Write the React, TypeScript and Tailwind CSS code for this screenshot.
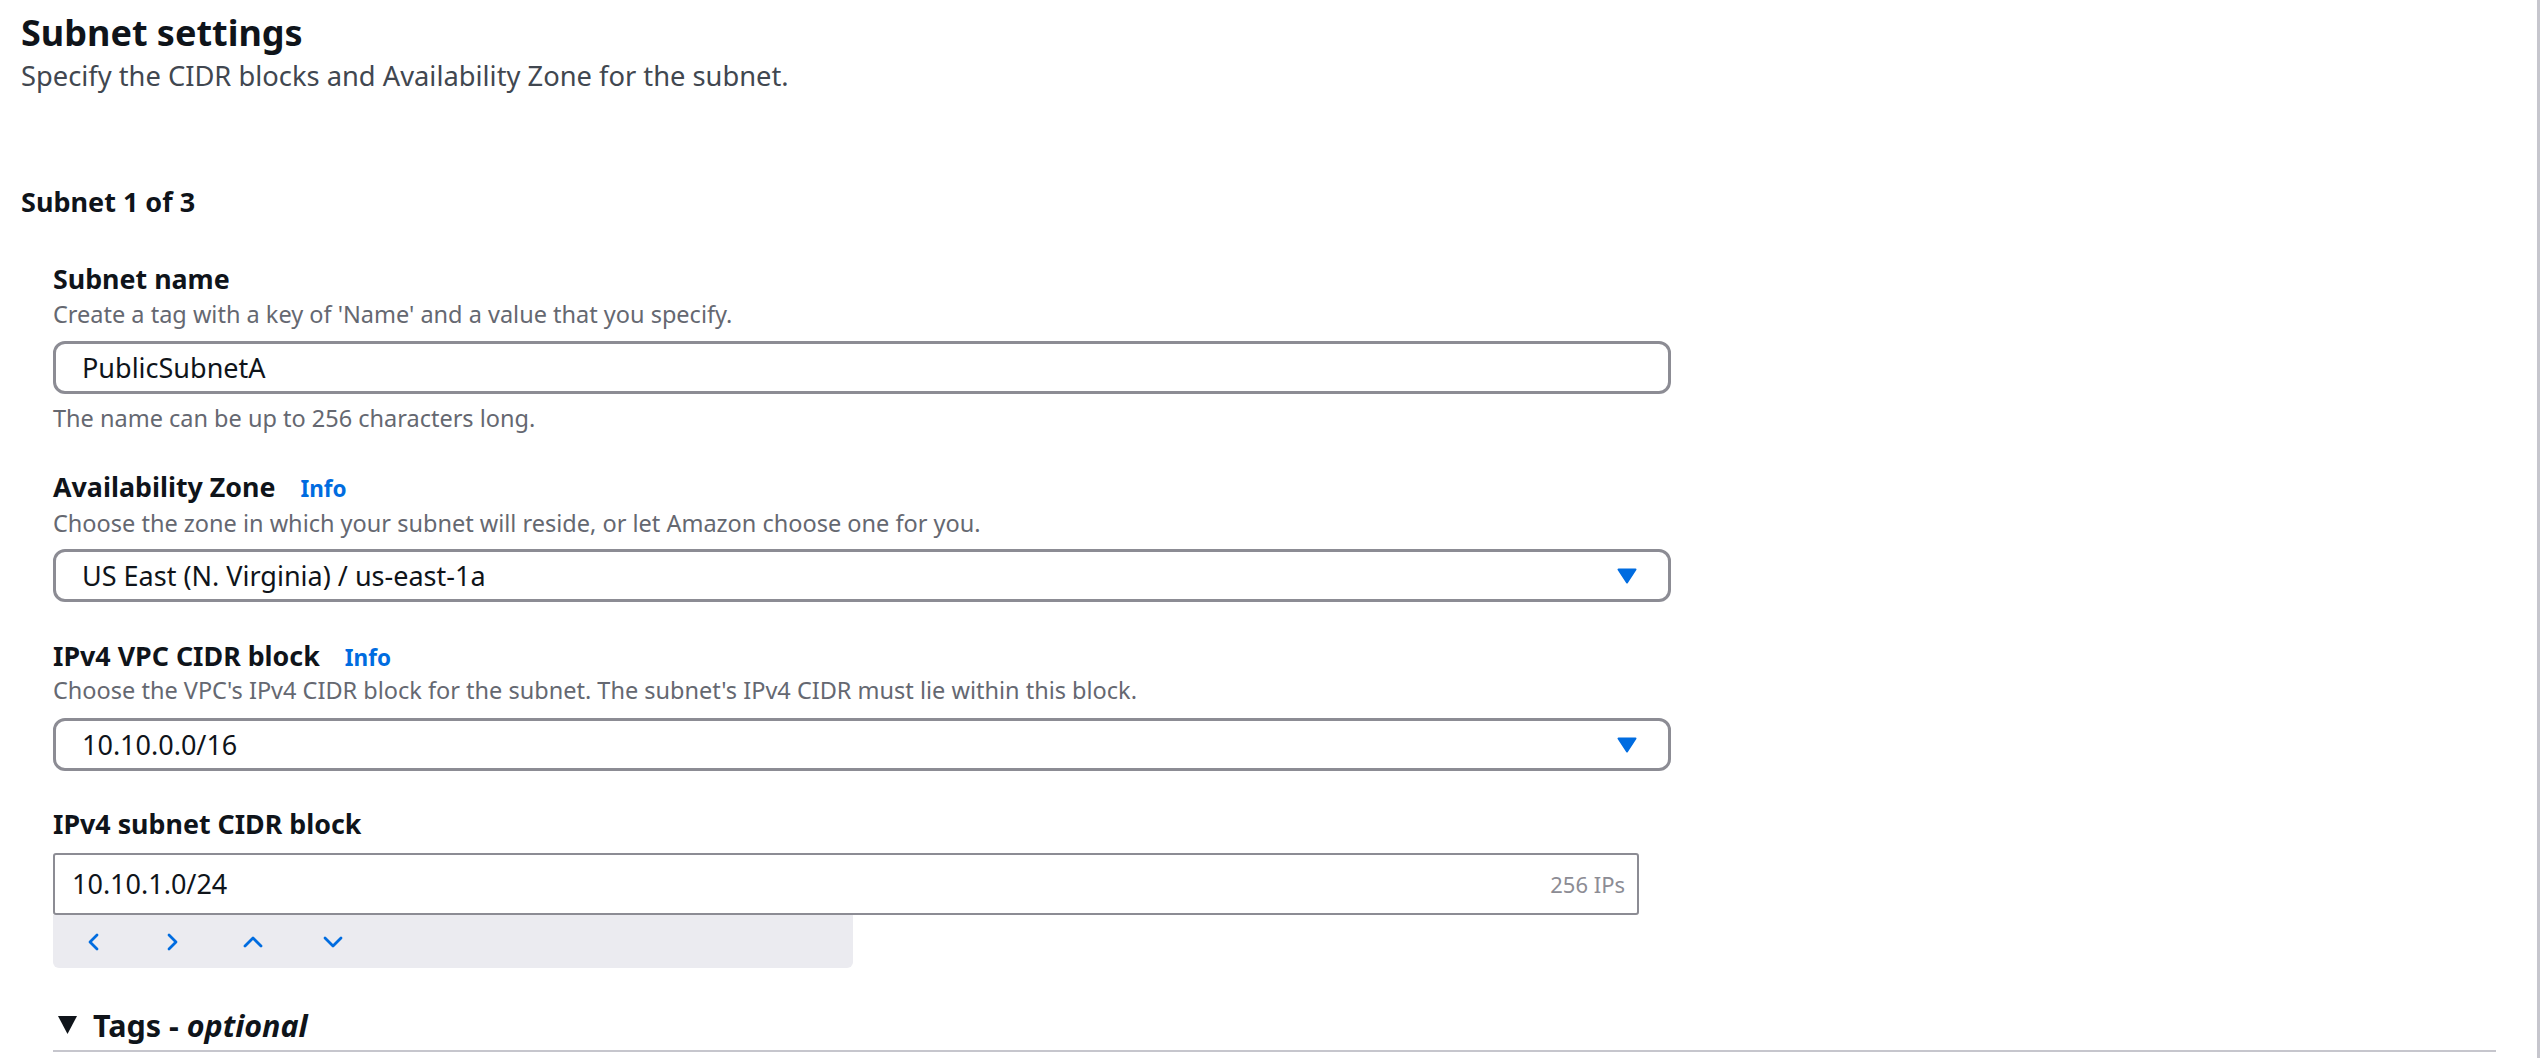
import React from 'react';

const Label = ({ text, info, className }: { text: string; info?: boolean; className?: string }) => (
  <div className={`h-[34px] text-[26.8px] leading-[34px] font-bold ${className ?? ''}`}>
    <span>{text}</span>
    {info && <span className="ml-[25px] text-[22.5px] leading-none font-bold text-[#006ce0]">Info</span>}
  </div>
);

const Hint = ({ text, className }: { text: string; className?: string }) => (
  <p className={`text-[23.5px] leading-[30px] text-[#656871] ${className ?? ''}`}>{text}</p>
);

const Box = ({ value, select, className }: { value: string; select?: boolean; className?: string }) => (
  <div
    className={`flex h-[53px] w-[1618px] items-center justify-between rounded-[12px] border-[3px] border-[#8c8c94] pl-[26px] pr-[31px] ${className ?? ''}`}
  >
    <span className="text-[27px] leading-[34px]">{value}</span>
    {select && (
      <svg width="20" height="16" viewBox="0 0 20 16">
        <path d="M1.5 1.5 H18.5 L10 14.5 Z" fill="#006ce0" stroke="#006ce0" strokeWidth="2" strokeLinejoin="round" />
      </svg>
    )}
  </div>
);

const Chevron = ({ dir }: { dir: 'left' | 'right' | 'up' | 'down' }) => {
  const pts = {
    left: '10,2 3,9 10,16',
    right: '2,2 9,9 2,16',
    up: '2,13 10,5 18,13',
    down: '2,5 10,13 18,5',
  }[dir];
  const w = dir === 'left' || dir === 'right' ? 12 : 20;
  const vb = dir === 'left' || dir === 'right' ? '0 0 12 18' : '0 0 20 18';
  return (
    <button className="flex h-full w-[80px] items-center justify-center">
      <svg width={w} height="18" viewBox={vb}>
        <polyline points={pts} fill="none" stroke="#006ce0" strokeWidth="2.8" strokeLinecap="round" strokeLinejoin="round" />
      </svg>
    </button>
  );
};

export default function App() {
  return (
    <div className="flex min-h-[1058px] bg-white font-['Noto_Sans',sans-serif] text-[#0f141a]">
      <div className="w-[2537px] pl-[21px] pt-[9px]">
        <h2 className="text-[36px] leading-[48px] font-bold">Subnet settings</h2>
        <p className="mt-[2px] text-[27.3px] leading-[34px] text-[#414750]">
          Specify the CIDR blocks and Availability Zone for the subnet.
        </p>

        <h3 className="mt-[92px] text-[27px] leading-[34px] font-bold">Subnet 1 of 3</h3>

        <div className="ml-[32px]">
          <Label text="Subnet name" className="mt-[43px]" />
          <Hint text="Create a tag with a key of 'Name' and a value that you specify." className="mt-[3px]" />
          <Box value="PublicSubnetA" className="mt-[12px]" />
          <Hint text="The name can be up to 256 characters long." className="mt-[9px]" />

          <Label text="Availability Zone" info className="mt-[37px]" />
          <Hint text="Choose the zone in which your subnet will reside, or let Amazon choose one for you." className="mt-[4px]" />
          <Box value="US East (N. Virginia) / us-east-1a" select className="mt-[11px]" />

          <Label text="IPv4 VPC CIDR block" info className="mt-[37px]" />
          <Hint text="Choose the VPC's IPv4 CIDR block for the subnet. The subnet's IPv4 CIDR must lie within this block." className="mt-[2px]" />
          <Box value="10.10.0.0/16" select className="mt-[13px]" />

          <Label text="IPv4 subnet CIDR block" className="mt-[36px]" />
          <div className="mt-[12px] flex h-[62px] w-[1586px] items-center justify-between rounded-[3px] border-2 border-[#8c8c94] pl-[17px] pr-[12px]">
            <span className="text-[27px] leading-[34px]">10.10.1.0/24</span>
            <span className="text-[22px] leading-[30px] text-[#8c8c94]">256 IPs</span>
          </div>
          <div className="flex h-[53px] w-[800px] rounded-b-[6px] bg-[#ebebf0]">
            <Chevron dir="left" />
            <Chevron dir="right" />
            <Chevron dir="up" />
            <Chevron dir="down" />
          </div>

          <div className="mt-[39px] flex items-center text-[30.5px] leading-[36px] font-bold">
            <svg width="19" height="18" viewBox="0 0 19 18" className="ml-[5px] mr-[16px]">
              <polygon points="0,0 19,0 9.5,18" fill="#0f141a" />
            </svg>
            <span>
              Tags - <em className="italic">optional</em>
            </span>
          </div>
          <div className="mt-[7px] h-[2px] w-[2443px] bg-[#c6c6cd]" />
        </div>
      </div>
      <div className="w-[3px] bg-[#c6c6cd]" />
    </div>
  );
}
